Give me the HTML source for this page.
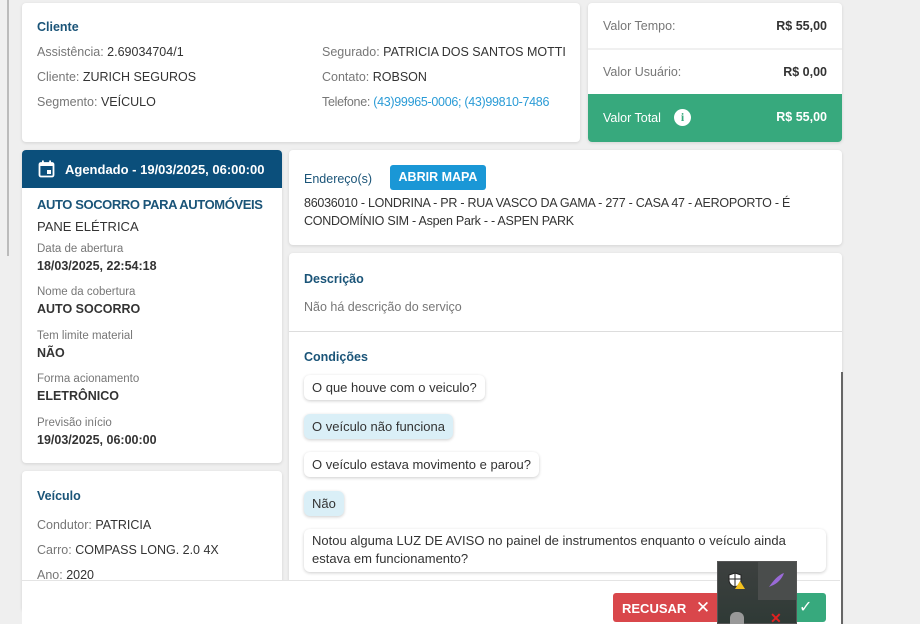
<!DOCTYPE html>
<html><head><meta charset="utf-8"><style>
*{box-sizing:border-box;margin:0;padding:0}
html,body{width:920px;height:624px;overflow:hidden}
body{background:#efefef;font-family:"Liberation Sans",sans-serif;font-size:12.5px;color:#333;position:relative;letter-spacing:0}
.card{position:absolute;background:#fff;border-radius:4px;box-shadow:0 1px 3px rgba(0,0,0,.12)}
.abs{position:absolute;white-space:nowrap}
.h{color:#1a5478;font-weight:bold;font-size:12.5px}
.lbl{color:#777}
.s{font-size:11.5px;color:#777}
.b{font-weight:bold;color:#333}
.bub{position:absolute;border-radius:6px;padding:0 8px;height:25px;line-height:25px;box-shadow:0 1px 3px rgba(0,0,0,.2);background:#fff;white-space:nowrap}
.sel{background:#daeff7}
</style></head><body>
<div class="abs" style="left:7px;top:0;width:2px;height:256px;background:#bbb"></div>

<div class="card" style="left:22px;top:3px;width:558px;height:139px">
 <div class="abs h" style="left:15px;top:17px">Cliente</div>
 <div class="abs" style="left:15px;top:42px"><span class="lbl">Assistência:</span> 2.69034704/1</div>
 <div class="abs" style="left:15px;top:67px"><span class="lbl">Cliente:</span> ZURICH SEGUROS</div>
 <div class="abs" style="left:15px;top:92px"><span class="lbl">Segmento:</span> VEÍCULO</div>
 <div class="abs" style="left:300px;top:42px"><span class="lbl">Segurado:</span> PATRICIA DOS SANTOS MOTTI</div>
 <div class="abs" style="left:300px;top:67px"><span class="lbl">Contato:</span> ROBSON</div>
 <div class="abs" style="left:300px;top:92px;letter-spacing:-0.3px"><span class="lbl">Telefone:</span> <span style="color:#2a9bd6">(43)99965-0006; (43)99810-7486</span></div>
</div>

<div class="card" style="left:588px;top:3px;width:254px;height:139px;overflow:hidden">
 <div class="abs lbl" style="left:15px;top:16px">Valor Tempo:</div>
 <div class="abs b" style="right:15px;top:16px">R$ 55,00</div>
 <div class="abs" style="left:0;top:45px;width:254px;height:2px;background:#f0f0f0"></div>
 <div class="abs lbl" style="left:15px;top:62px">Valor Usuário:</div>
 <div class="abs b" style="right:15px;top:62px">R$ 0,00</div>
 <div class="abs" style="left:0;top:91px;width:254px;height:48px;background:#37a97d"></div>
 <div class="abs" style="left:15px;top:108px;color:#fff">Valor Total</div>
 <div class="abs" style="left:86px;top:106px;width:17px;height:17px;border-radius:50%;background:#fff;color:#37a97d;font-weight:bold;font-size:12px;text-align:center;line-height:17px;font-family:'Liberation Serif',serif">i</div>
 <div class="abs" style="right:15px;top:107px;color:#fff;font-weight:bold">R$ 55,00</div>
</div>

<div class="card" style="left:22px;top:150px;width:260px;height:313px;overflow:hidden">
 <div class="abs" style="left:0;top:0;width:260px;height:38px;background:#0b4f7b"></div>
 <svg class="abs" style="left:16px;top:10px" width="17" height="18" viewBox="0 0 17 18"><rect x="1.5" y="3" width="14" height="13.5" rx="1.5" fill="none" stroke="#fff" stroke-width="1.8"/><rect x="1.5" y="3" width="14" height="3" fill="#fff"/><rect x="4" y="0.5" width="1.8" height="4" fill="#fff"/><rect x="11.2" y="0.5" width="1.8" height="4" fill="#fff"/><rect x="9" y="10" width="4" height="4" fill="#fff"/></svg>
 <div class="abs" style="left:43px;top:12px;color:#fff;font-weight:bold;font-size:13px">Agendado - 19/03/2025, 06:00:00</div>
 <div class="abs" style="left:15px;top:47px;color:#1a5478;font-size:13px;font-weight:bold;letter-spacing:-0.4px">AUTO SOCORRO PARA AUTOMÓVEIS</div>
 <div class="abs" style="left:15px;top:69px;font-size:13px">PANE ELÉTRICA</div>
 <div class="abs s" style="left:15px;top:93px">Data de abertura</div>
 <div class="abs b" style="left:15px;top:109px">18/03/2025, 22:54:18</div>
 <div class="abs s" style="left:15px;top:136px">Nome da cobertura</div>
 <div class="abs b" style="left:15px;top:152px">AUTO SOCORRO</div>
 <div class="abs s" style="left:15px;top:180px">Tem limite material</div>
 <div class="abs b" style="left:15px;top:196px">NÃO</div>
 <div class="abs s" style="left:15px;top:223px">Forma acionamento</div>
 <div class="abs b" style="left:15px;top:239px">ELETRÔNICO</div>
 <div class="abs s" style="left:15px;top:267px">Previsão início</div>
 <div class="abs b" style="left:15px;top:283px">19/03/2025, 06:00:00</div>
</div>

<div class="card" style="left:22px;top:471px;width:260px;height:140px">
 <div class="abs h" style="left:15px;top:18px">Veículo</div>
 <div class="abs" style="left:15px;top:47px"><span class="lbl">Condutor:</span> PATRICIA</div>
 <div class="abs" style="left:15px;top:72px"><span class="lbl">Carro:</span> COMPASS LONG. 2.0 4X</div>
 <div class="abs" style="left:15px;top:97px"><span class="lbl">Ano:</span> 2020</div>
</div>

<div class="card" style="left:289px;top:150px;width:553px;height:95px">
 <div class="abs" style="left:15px;top:22px;color:#1a5478">Endereço(s)</div>
 <div class="abs" style="left:101px;top:15px;width:96px;height:25px;background:#1a97d6;border-radius:3px;color:#fff;font-weight:bold;text-align:center;line-height:25px">ABRIR MAPA</div>
 <div class="abs" style="left:15px;top:46px;letter-spacing:-0.25px">86036010 - LONDRINA - PR - RUA VASCO DA GAMA - 277 - CASA 47 - AEROPORTO - É</div>
 <div class="abs" style="left:15px;top:64px;letter-spacing:-0.25px">CONDOMÍNIO SIM - Aspen Park - - ASPEN PARK</div>
</div>

<div class="card" style="left:289px;top:253px;width:553px;height:371px;border-radius:4px 4px 0 0">
 <div class="abs h" style="left:15px;top:19px">Descrição</div>
 <div class="abs lbl" style="left:15px;top:47px">Não há descrição do serviço</div>
 <div class="abs" style="left:0;top:78px;width:553px;height:1px;background:#ddd"></div>
 <div class="abs h" style="left:15px;top:97px">Condições</div>
</div>
<div class="bub" style="left:304px;top:375px;font-size:13px">O que houve com o veiculo?</div>
<div class="bub sel" style="left:304px;top:414px;font-size:13px">O veículo não funciona</div>
<div class="bub" style="left:304px;top:452px;font-size:13px">O veículo estava movimento e parou?</div>
<div class="bub sel" style="left:304px;top:491px;font-size:13px">Não</div>
<div class="bub" style="left:304px;top:529px;width:522px;height:43px;line-height:18px;padding-top:3px;font-size:13px">Notou alguma LUZ DE AVISO no painel de instrumentos enquanto o veículo ainda<br>estava em funcionamento?</div>
<div class="abs" style="left:841px;top:372px;width:2px;height:252px;background:#666"></div>

<div class="abs" style="left:22px;top:580px;width:818px;height:44px;background:#fff;border-top:1px solid #e4e4e4"></div>
<div class="abs" style="left:613px;top:593px;width:110px;height:29px;background:#d9474b;border-radius:3px;color:#fff;font-weight:bold;line-height:29px;padding-left:9px;font-size:13px">RECUSAR <span style="font-weight:normal;font-size:17px;margin-left:6px">✕</span></div>
<div class="abs" style="left:723px;top:593px;width:103px;height:29px;background:#37a97d;border-radius:3px;color:#fff;font-size:16px;line-height:29px;padding-left:76px">✓</div>

<div class="abs" style="left:717px;top:561px;width:80px;height:63px;background:linear-gradient(#3d403f,#2f3a36);border:1px solid #555"></div>
<div class="abs" style="left:758px;top:562px;width:38px;height:38px;background:#4a4d4c"></div>
<svg class="abs" style="left:728px;top:572px" width="18" height="18" viewBox="0 0 18 18"><path d="M7 1 L13 3 V8 C13 12 10 14 7 15 C4 14 1 12 1 8 V3 Z" fill="#fff" stroke="#222"/><path d="M7 1V15M1 7H13" stroke="#222"/><path d="M12 9 L17 17 H7 Z" fill="#f2c01e"/></svg>
<svg class="abs" style="left:767px;top:571px" width="18" height="18" viewBox="0 0 18 18"><path d="M2 16 C6 10 11 4 17 2 C15 8 10 13 4 15 Z" fill="#9a6ad8"/></svg>
<div class="abs" style="left:730px;top:612px;width:14px;height:12px;background:#999;border-radius:6px 6px 0 0"></div>
<div class="abs" style="left:770px;top:610px;color:#e02020;font-weight:bold;font-size:14px">✕</div>
</body></html>
